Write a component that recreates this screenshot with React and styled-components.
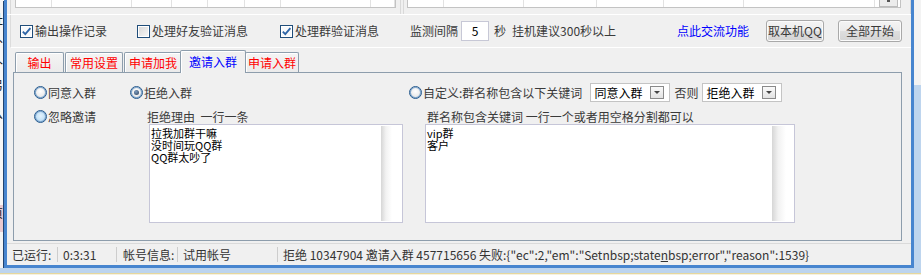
import React from "react";
import styled, { createGlobalStyle } from "styled-components";

const FONT = `"Noto Sans CJK SC", "Liberation Sans", sans-serif`;

const GlobalStyle = createGlobalStyle`
  body {
    margin: 0;
    background: #c4d9ef;
    font-family: ${FONT};
    font-size: 12px;
  }
`;

const Screen = styled.div`
  width: 921px;
  height: 275px;
  display: flex;
  flex-direction: column;
  overflow: hidden;
`;

const Desk = styled.div`
  height: 268px;
  display: flex;
`;

const BackStrip = styled.div`
  width: 4px;
  overflow: hidden;
  background: linear-gradient(to bottom, #f6f6f6 0 205px, #e9c9cf 205px 232px, #f4f4f4 232px);
  display: flex;
  flex-direction: column;
  padding-top: 8px;
`;

const BackGlyph = styled.span`
  display: block;
  height: ${(p) => p.h || 22}px;
  line-height: ${(p) => p.h || 22}px;
  margin-left: -9px;
  color: #222;
  font-size: 12px;
  white-space: nowrap;
`;

const Window = styled.div`
  width: 910px;
  height: 268px;
  box-sizing: border-box;
  border: 3px solid #4785cf;
  border-top: none;
  box-shadow: -1px 1px 0 #21436f, 1px 1px 0 #21436f;
  background: #f0f0f0;
  display: flex;
  flex-direction: column;
  color: #3a3a3a;
`;

const SideStrip = styled.div`
  flex: 1;
  background: linear-gradient(to bottom, #f3f3f3 0 85px, #bed5ee 85px);
`;

const BottomStrip = styled.div`
  height: 7px;
  background: linear-gradient(to bottom, #bcd4ee 0 5px, #e6d79d 5px 6px, #f4f1e2 6px);
`;

/* top list views (only their lower edge is visible) */
const TopArea = styled.div`
  height: 15px;
  box-sizing: border-box;
  display: flex;
  border-bottom: 1px solid #ffffff;
`;

const ListPane = styled.div`
  margin-left: ${(p) => p.ml}px;
  width: ${(p) => (p.w ? `${p.w}px` : "auto")};
  flex: ${(p) => (p.w ? "none" : 1)};
  box-sizing: border-box;
  border-left: 1px solid #d9d9d9;
  border-right: 1px solid #d9d9d9;
  padding-left: ${(p) => p.pl}px;
`;

const ListView = styled.div`
  width: ${(p) => p.w}px;
  height: 8px;
  box-sizing: border-box;
  background: #ffffff;
  border: 1px solid #c3c3c3;
  border-top: none;
  display: flex;
`;

const ListCol = styled.div`
  width: ${(p) => (p.w ? `${p.w}px` : "auto")};
  flex: ${(p) => (p.w ? "none" : 1)};
  height: 100%;
  border-right: 1px solid #e2e2e2;
  box-sizing: border-box;
`;

const ListScroll = styled.div`
  width: 19px;
  margin-left: 4px;
  height: 100%;
  box-sizing: border-box;
  border: 1px solid #bdbdbd;
  border-top: none;
  background: #ececec;
  display: flex;
  justify-content: center;
  &::after {
    content: "";
    width: 3px;
    height: 2px;
    background: #555;
  }
`;

/* option bar */
const OptionsBar = styled.div`
  height: 33px;
  margin-left: 3px;
  padding-right: 9px;
  box-sizing: border-box;
  border-left: 1px solid #dcdcdc;
  border-bottom: 1px solid #ffffff;
  display: flex;
  align-items: center;
  line-height: 16px;
`;

const CheckItem = styled.div`
  display: flex;
  align-items: center;
  gap: 2px;
  margin-left: ${(p) => p.ml || 0}px;
`;

const CheckBox = styled.span`
  width: 13px;
  height: 13px;
  box-sizing: border-box;
  border: 1px solid #1f4d7a;
  background: ${(p) => (p.checked ? "#f7f9fb" : "linear-gradient(135deg, #d6d6d6, #f8f8f8)")};
  box-shadow: inset 0 0 0 1px #ffffff;
  display: flex;
  align-items: center;
  justify-content: center;
`;

const Text = styled.span`
  margin-left: ${(p) => p.ml || 0}px;
  color: ${(p) => p.color || "#3a3a3a"};
  white-space: pre;
`;

const NumBox = styled.div`
  width: 28px;
  height: 20px;
  margin-left: ${(p) => p.ml}px;
  box-sizing: border-box;
  border: 1px solid #c7c8d6;
  background: #ffffff;
  color: #000;
  display: flex;
  align-items: center;
  justify-content: center;
`;

const Link = styled.span`
  margin-left: auto;
  margin-right: 17px;
  color: #0000ff;
`;

const Button = styled.div`
  width: ${(p) => p.w}px;
  height: 22px;
  margin-right: ${(p) => p.mr || 0}px;
  box-sizing: border-box;
  border: 1px solid #a9a9a9;
  border-radius: 3px;
  background: linear-gradient(to bottom, #f4f4f4 0%, #ececec 48%, #dedede 52%, #d4d4d4 100%);
  box-shadow: inset 0 0 0 1px #fbfbfb;
  display: flex;
  align-items: center;
  justify-content: center;
  color: #3a3a3a;
`;

/* tabs */
const TabStrip = styled.div`
  height: 22px;
  margin-top: 2px;
  padding-left: 8px;
  display: flex;
  align-items: flex-end;
`;

const Tab = styled.div`
  position: relative;
  z-index: ${(p) => (p.active ? 2 : 1)};
  width: ${(p) => p.w}px;
  height: ${(p) => (p.active ? 23 : 20)}px;
  margin: 0 ${(p) => p.mr || 0}px ${(p) => (p.active ? -1 : 0)}px ${(p) => p.ml || 0}px;
  box-sizing: border-box;
  border: 1px solid #8d9dac;
  border-bottom: none;
  border-radius: 2px 2px 0 0;
  background: ${(p) => (p.active ? "#f0f0f0" : "linear-gradient(to bottom, #f4f4f4, #ebebeb)")};
  box-shadow: inset 1px 1px 0 #ffffff;
  color: ${(p) => (p.active ? "#0000ff" : "#ff0000")};
  display: flex;
  justify-content: center;
  align-items: ${(p) => (p.active ? "flex-start" : "center")};
  padding-top: ${(p) => (p.active ? 3 : 0)}px;
  line-height: 16px;
`;

const TabBody = styled.div`
  width: 889px;
  height: 169px;
  margin-left: 6px;
  box-sizing: border-box;
  border: 1px solid #8d9dac;
  background: #f0f0f0;
  line-height: 14px;
`;

const FormRow = styled.div`
  display: flex;
  align-items: ${(p) => p.align || "center"};
  height: ${(p) => (p.h ? `${p.h}px` : "auto")};
  margin-top: ${(p) => p.mt}px;
`;

const RadioItem = styled.div`
  display: flex;
  align-items: center;
  gap: 1px;
  height: 13px;
  margin-left: ${(p) => p.ml || 0}px;
`;

const Radio = styled.span`
  width: 13px;
  height: 13px;
  box-sizing: border-box;
  border-radius: 50%;
  border: 1px solid #275a8d;
  box-shadow: inset 0 0 0 1px #7fa7cf;
  background: ${(p) =>
    p.hover
      ? "radial-gradient(circle at 50% 45%, #e4f3fd 0, #b9dcf5 70%)"
      : "radial-gradient(circle at 50% 40%, #ffffff 0, #e3e3e3 80%)"};
  display: flex;
  align-items: center;
  justify-content: center;
  &::after {
    content: "";
    display: ${(p) => (p.checked ? "block" : "none")};
    width: 5px;
    height: 5px;
    border-radius: 50%;
    background: radial-gradient(circle at 40% 35%, #7c9cc0, #2c3f58);
  }
`;

const Combo = styled.div`
  width: 80px;
  height: 19px;
  margin-left: ${(p) => p.ml}px;
  box-sizing: border-box;
  border: 1px solid #c4c4c4;
  background: #ffffff;
  padding: 0 5px 0 3px;
  display: flex;
  align-items: center;
  color: #000;
`;

const ComboText = styled.span`
  flex: 1;
`;

const ComboButton = styled.span`
  width: 14px;
  height: 13px;
  box-sizing: border-box;
  border: 1px solid #8a8a8a;
  background: linear-gradient(to bottom, #fafafa, #e2e2e2);
  display: flex;
  align-items: center;
  justify-content: center;
  &::after {
    content: "";
    border-left: 3px solid transparent;
    border-right: 3px solid transparent;
    border-top: 3px solid #444;
  }
`;

const FieldColumn = styled.div`
  display: flex;
  flex-direction: column;
  margin-left: ${(p) => p.ml}px;
`;

const FieldLabel = styled.div`
  height: 14px;
  line-height: 13px;
  padding-left: ${(p) => p.pl || 0}px;
  color: #3a3a3a;
  white-space: pre;
`;

const MemoBox = styled.div`
  width: ${(p) => p.w}px;
  height: 99px;
  margin-left: ${(p) => p.ml || 0}px;
  box-sizing: border-box;
  border: 1px solid #c6c6d8;
  background: #ffffff;
  display: flex;
  padding: 1px ${(p) => p.pr}px 1px 1px;
`;

const MemoText = styled.div`
  flex: 1;
  color: #000;
  font-size: 11px;
  line-height: 12px;
  padding-top: 1px;
`;

const MemoShade = styled.div`
  width: ${(p) => p.w}px;
  background: linear-gradient(to right, #d6d6d6, #f2f2f2 45%, #ffffff);
`;

/* status bar */
const StatusBar = styled.div`
  height: 22px;
  margin-top: 2px;
  box-sizing: border-box;
  border-top: 1px solid #dadada;
  display: flex;
  align-items: center;
  color: #333;
  line-height: 15px;
`;

const StatusCell = styled.div`
  width: ${(p) => (p.w ? `${p.w}px` : "auto")};
  flex: ${(p) => (p.w ? "none" : 1)};
  height: 15px;
  box-sizing: border-box;
  padding-left: ${(p) => p.pl || 5}px;
  border-right: ${(p) => (p.w ? "1px solid #cdcdcd" : "none")};
  white-space: pre;
`;

const Check = () => (
  <svg width="11" height="11" viewBox="0 0 11 11">
    <path d="M1.8 5.6 L4.3 8.2 L9.4 2.2" fill="none" stroke="#2c64a6" strokeWidth="1.8" />
  </svg>
);

const leftCols = [36, 80, 40, 36, 37, 36, 90];
const rightCols = [36, 80, 73, 67, 80, 131];

export default function App() {
  return (
    <>
      <GlobalStyle />
      <Screen>
        <Desk>
          <BackStrip>
            <BackGlyph>址</BackGlyph>
            <BackGlyph>仆</BackGlyph>
            <BackGlyph>讣</BackGlyph>
            <BackGlyph>另</BackGlyph>
            <BackGlyph h={36}>么</BackGlyph>
            <BackGlyph h={70}>.</BackGlyph>
            <BackGlyph>页</BackGlyph>
          </BackStrip>
          <Window>
            <TopArea>
              <ListPane ml={3} w={391} pl={4}>
                <ListView w={381}>
                  {leftCols.map((w, i) => (
                    <ListCol key={i} w={w} />
                  ))}
                  <ListCol />
                </ListView>
              </ListPane>
              <ListPane ml={2} pl={3}>
                <ListView w={494}>
                  {rightCols.map((w, i) => (
                    <ListCol key={i} w={w} />
                  ))}
                  <ListScroll />
                </ListView>
              </ListPane>
            </TopArea>

            <OptionsBar>
              <CheckItem ml={9}>
                <CheckBox checked>
                  <Check />
                </CheckBox>
                <Text>输出操作记录</Text>
              </CheckItem>
              <CheckItem ml={30}>
                <CheckBox />
                <Text>处理好友验证消息</Text>
              </CheckItem>
              <CheckItem ml={32}>
                <CheckBox checked>
                  <Check />
                </CheckBox>
                <Text>处理群验证消息</Text>
              </CheckItem>
              <Text ml={31}>监测间隔</Text>
              <NumBox ml={3}>5</NumBox>
              <Text ml={5}>秒</Text>
              <Text ml={6}>挂机建议300秒以上</Text>
              <Link>点此交流功能</Link>
              <Button w={58} mr={14}>
                取本机QQ
              </Button>
              <Button w={64}>全部开始</Button>
            </OptionsBar>

            <TabStrip>
              <Tab w={49} mr={1}>输出</Tab>
              <Tab w={58} mr={1}>常用设置</Tab>
              <Tab w={58} mr={1}>申请加我</Tab>
              <Tab w={66} ml={-3} mr={-1} active>
                邀请入群
              </Tab>
              <Tab w={54}>申请入群</Tab>
            </TabStrip>

            <TabBody>
              <FormRow mt={10} h={19}>
                <RadioItem ml={20}>
                  <Radio />
                  <Text>同意入群</Text>
                </RadioItem>
                <RadioItem ml={34}>
                  <Radio checked />
                  <Text>拒绝入群</Text>
                </RadioItem>
                <RadioItem ml={217}>
                  <Radio />
                  <Text>自定义:群名称包含以下关键词</Text>
                </RadioItem>
                <Combo ml={8}>
                  <ComboText>同意入群</ComboText>
                  <ComboButton />
                </Combo>
                <Text ml={4}>否则</Text>
                <Combo ml={4}>
                  <ComboText>拒绝入群</ComboText>
                  <ComboButton />
                </Combo>
              </FormRow>

              <FormRow mt={8} align="flex-start">
                <RadioItem ml={20}>
                  <Radio hover />
                  <Text>忽略邀请</Text>
                </RadioItem>
                <FieldColumn ml={51}>
                  <FieldLabel>拒绝理由  一行一条</FieldLabel>
                  <MemoBox w={254} ml={2} pr={10}>
                    <MemoText>
                      拉我加群干嘛
                      <br />
                      没时间玩QQ群
                      <br />
                      QQ群太吵了
                    </MemoText>
                    <MemoShade w={11} />
                  </MemoBox>
                </FieldColumn>
                <FieldColumn ml={22}>
                  <FieldLabel pl={2}>群名称包含关键词 一行一个或者用空格分割都可以</FieldLabel>
                  <MemoBox w={370} pr={8}>
                    <MemoText>
                      vip群
                      <br />
                      客户
                    </MemoText>
                    <MemoShade w={14} />
                  </MemoBox>
                </FieldColumn>
              </FormRow>
            </TabBody>

            <StatusBar>
              <StatusCell w={51}>已运行:</StatusCell>
              <StatusCell w={59}>0:3:31</StatusCell>
              <StatusCell w={61} pl={6}>
                帐号信息:
              </StatusCell>
              <StatusCell w={100}>试用帐号</StatusCell>
              <StatusCell>
                拒绝 10347904 邀请入群 457715656 失败:{"{"}"ec":2,"em":"Setnbsp;state<u>n</u>bsp;error","reason":1539{"}"}
              </StatusCell>
            </StatusBar>
          </Window>
          <SideStrip />
        </Desk>
        <BottomStrip />
      </Screen>
    </>
  );
}
